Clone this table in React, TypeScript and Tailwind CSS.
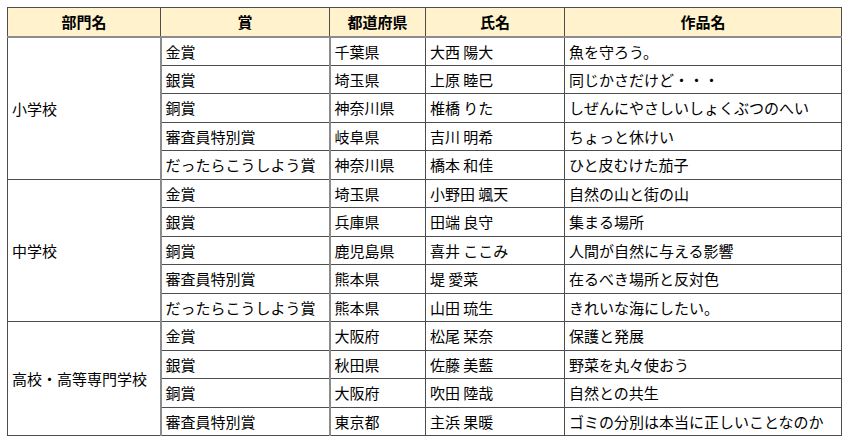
const groups = [
  {
    name: "小学校",
    rows: [
      ["金賞", "千葉県", "大西 陽大", "魚を守ろう。"],
      ["銀賞", "埼玉県", "上原 睦巳", "同じかさだけど・・・"],
      ["銅賞", "神奈川県", "椎橋 りた", "しぜんにやさしいしょくぶつのへい"],
      ["審査員特別賞", "岐阜県", "吉川 明希", "ちょっと休けい"],
      ["だったらこうしよう賞", "神奈川県", "橋本 和佳", "ひと皮むけた茄子"],
    ],
  },
  {
    name: "中学校",
    rows: [
      ["金賞", "埼玉県", "小野田 颯天", "自然の山と街の山"],
      ["銀賞", "兵庫県", "田端 良守", "集まる場所"],
      ["銅賞", "鹿児島県", "喜井 ここみ", "人間が自然に与える影響"],
      ["審査員特別賞", "熊本県", "堤 愛菜", "在るべき場所と反対色"],
      ["だったらこうしよう賞", "熊本県", "山田 琉生", "きれいな海にしたい。"],
    ],
  },
  {
    name: "高校・高等専門学校",
    rows: [
      ["金賞", "大阪府", "松尾 栞奈", "保護と発展"],
      ["銀賞", "秋田県", "佐藤 美藍", "野菜を丸々使おう"],
      ["銅賞", "大阪府", "吹田 陸哉", "自然との共生"],
      ["審査員特別賞", "東京都", "主浜 果暖", "ゴミの分別は本当に正しいことなのか"],
    ],
  },
];

export default function App() {
  return (
    <div
      className="w-[850px] h-[442px] bg-white pt-[7px] pl-[7px]"
      style={{ fontFamily: '"Noto Sans CJK JP", "Noto Sans", sans-serif' }}
    >
      <table className="border-collapse w-[834px] table-fixed text-[15px] text-black leading-none">
        <colgroup>
          <col className="w-[153px]" />
          <col className="w-[169px]" />
          <col className="w-[96px]" />
          <col className="w-[139px]" />
          <col className="w-[277px]" />
        </colgroup>
        <thead>
          <tr className="h-[29px] bg-[#fff2cc]">
            {["部門名", "賞", "都道府県", "氏名", "作品名"].map((h) => (
              <th
                key={h}
                className="border border-[#4d4d4d] border-b-2 border-b-[#8c8c8c] font-bold text-center"
              >
                {h}
              </th>
            ))}
          </tr>
        </thead>
        <tbody>
          {groups.map((g) =>
            g.rows.map((r, i) => (
              <tr key={g.name + i} className="h-[28.5px]">
                {i === 0 && (
                  <td
                    rowSpan={g.rows.length}
                    className="border border-[#4d4d4d] border-r-2 border-r-[#8c8c8c] px-[4px] align-middle"
                  >
                    {g.name}
                  </td>
                )}
                <td className="border border-[#4d4d4d] border-r-2 border-r-[#8c8c8c] px-[4px]">{r[0]}</td>
                <td className="border border-[#4d4d4d] px-[4px]">{r[1]}</td>
                <td className="border border-[#4d4d4d] px-[4px]">{r[2]}</td>
                <td className="border border-[#4d4d4d] px-[4px]">{r[3]}</td>
              </tr>
            ))
          )}
        </tbody>
      </table>
    </div>
  );
}
